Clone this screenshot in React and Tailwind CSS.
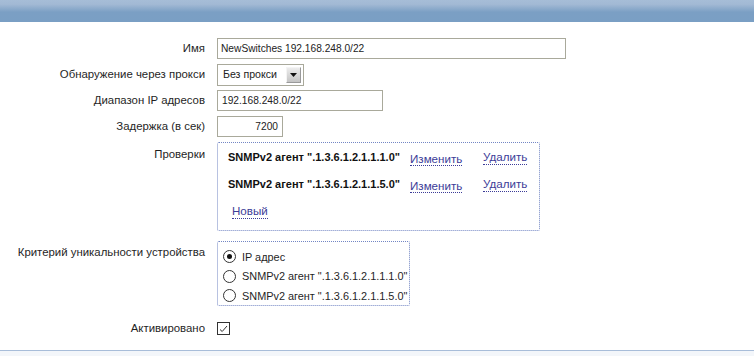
import { useState } from 'react';

const font = { fontFamily: '"Liberation Sans", Arial, sans-serif' };

function Label({ children, className = '' }) {
  return (
    <div className={`text-right whitespace-nowrap text-[11.4px] text-[#1f1f1f] leading-[21px] ${className}`}>
      {children}
    </div>
  );
}

function DotLink({ children }) {
  return (
    <a href="#" className="text-[11.6px] text-[#3c3c98] border-b border-dotted border-[#3c3c98] leading-[14px] no-underline whitespace-nowrap">
      {children}
    </a>
  );
}

function Radio({ checked, label }) {
  return (
    <label className="flex items-center gap-[6px] h-[19.5px] text-[10.9px] text-[#1f1f1f] whitespace-nowrap">
      <span className="w-[13px] h-[13px] shrink-0 rounded-full border border-[#333] bg-white flex items-center justify-center">
        {checked && <span className="w-[5px] h-[5px] rounded-full bg-[#111]" />}
      </span>
      {label}
    </label>
  );
}

export default function App() {
  const [checks] = useState([
    'SNMPv2 агент ".1.3.6.1.2.1.1.1.0"',
    'SNMPv2 агент ".1.3.6.1.2.1.1.5.0"',
  ]);

  return (
    <div className="w-[754px] h-[356px] bg-white overflow-hidden flex flex-col" style={font}>
      <div className="h-[22px] bg-[linear-gradient(to_bottom,#a6bdd7_0%,#a2b9d4_20%,#7b9fc4_55%,#7a9fc4_100%)]" />

      <div className="grid grid-cols-[205px_auto] gap-x-[12px] pt-[16px] items-start">
        <Label>Имя</Label>
        <div className="mb-[5px]">
          <div className="w-[349px] h-[21px] border border-[#a9a99b] px-[3px] text-[10.2px] leading-[19px] text-[#222] whitespace-nowrap">
            NewSwitches 192.168.248.0/22
          </div>
        </div>

        <Label>Обнаружение через прокси</Label>
        <div className="mb-[4px]">
          <div className="w-[87px] h-[22px] border border-[#a9a99b] flex items-center justify-between pl-[5px] pr-[2px] text-[10.6px] text-[#222] whitespace-nowrap">
            <span>Без прокси</span>
            <span className="w-[15px] h-[16px] bg-[linear-gradient(to_bottom,#ececec,#c4c4c4)] border border-[#9a9a9a] border-t-[#f4f4f4] border-l-[#f4f4f4] flex items-center justify-center">
              <svg width="7" height="4" viewBox="0 0 7 4"><path d="M0 0h7L3.5 4z" fill="#111" /></svg>
            </span>
          </div>
        </div>

        <Label>Диапазон IP адресов</Label>
        <div className="mb-[5px]">
          <div className="w-[166px] h-[21px] border border-[#a9a99b] px-[4px] text-[10.2px] leading-[19px] text-[#222]">
            192.168.248.0/22
          </div>
        </div>

        <Label>Задержка (в сек)</Label>
        <div className="mb-[5px]">
          <div className="w-[66px] h-[21px] border border-[#a9a99b] px-[4px] text-right text-[10.2px] leading-[19px] text-[#222]">
            7200
          </div>
        </div>

        <Label className="pt-[2px] leading-[18px]">Проверки</Label>
        <div className="mb-[10px]">
          <div className="w-[323px] h-[89px] border border-dotted border-[#7386c4] rounded-[2px] pl-[10px] pt-[1px]">
            {checks.map((c) => (
              <div key={c} className="flex items-center h-[27px]">
                <span className="w-[182px] shrink-0 whitespace-nowrap text-[11px] font-bold text-[#111]">{c}</span>
                <span className="w-[73px] shrink-0"><DotLink>Изменить</DotLink></span>
                <DotLink>Удалить</DotLink>
              </div>
            ))}
            <div className="flex items-center h-[27px] pl-[4px]">
              <DotLink>Новый</DotLink>
            </div>
          </div>
        </div>

        <Label className="pt-[1px] leading-[21px]">Критерий уникальности устройства</Label>
        <div className="mb-[12px]">
          <div className="w-[193px] h-[65px] border border-dotted border-[#7386c4] rounded-[2px] pl-[5px] pt-[5px]">
            <Radio checked label="IP адрес" />
            {checks.map((c) => (
              <Radio key={c} label={c} />
            ))}
          </div>
        </div>

        <Label>Активировано</Label>
        <div className="h-[21px] flex items-center">
          <span className="w-[13px] h-[13px] border border-[#333] flex items-center justify-center">
            <svg width="9" height="8" viewBox="0 0 9 8">
              <path d="M1 4.5l2.2 2L8 1" fill="none" stroke="#333" strokeWidth="1" />
            </svg>
          </span>
        </div>
      </div>

      <div className="flex-1" />
      <div className="h-[6px] border-t border-[#a8bdd9] bg-[#f3f6fa]" />
    </div>
  );
}
